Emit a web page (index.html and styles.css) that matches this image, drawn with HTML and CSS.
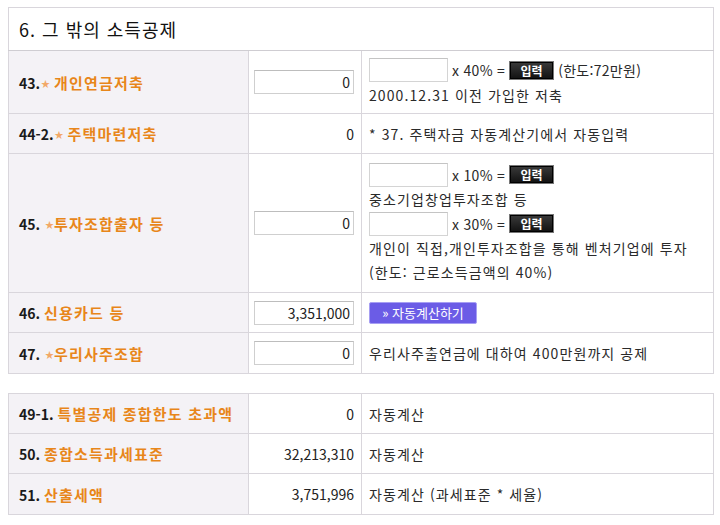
FILE: index.html
```html
<!DOCTYPE html>
<html lang="ko">
<head>
  <meta charset="UTF-8">
  <title>그 밖의 소득공제</title>
  <link rel="stylesheet" href="styles.css">
</head>
<body>
  <div class="wrap">
    <table class="calc">
      <colgroup>
        <col class="c-label"><col class="c-val"><col class="c-desc">
      </colgroup>
      <tr class="head">
        <td colspan="3">6. 그 밖의 소득공제</td>
      </tr>
      <tr class="h63">
        <th><span class="no">43.</span><span class="star">★</span> <span class="name">개인연금저축</span></th>
        <td class="val"><input class="num" type="text" value="0"></td>
        <td class="desc">
          <div class="calc-line"><input class="small" type="text"> <span>x 40% =</span> <button class="btn-in">입력</button> <span>(한도:72만원)</span></div>
          <div class="line">2000.12.31 이전 가입한 저축</div>
        </td>
      </tr>
      <tr class="h40">
        <th><span class="no">44-2.</span><span class="star">★</span> <span class="name">주택마련저축</span></th>
        <td class="val">0</td>
        <td class="desc">* 37. 주택자금 자동계산기에서 자동입력</td>
      </tr>
      <tr class="h139">
        <th><span class="no">45.</span> <span class="star">★</span><span class="name">투자조합출자 등</span></th>
        <td class="val"><input class="num" type="text" value="0"></td>
        <td class="desc">
          <div class="calc-line"><input class="small" type="text"><span>x 10% =</span> <button class="btn-in">입력</button></div>
          <div class="line">중소기업창업투자조합 등</div>
          <div class="calc-line"><input class="small" type="text"><span>x 30% =</span> <button class="btn-in">입력</button></div>
          <div class="line">개인이 직접,개인투자조합을 통해 벤처기업에 투자</div>
          <div class="line">(한도: 근로소득금액의 40%)</div>
        </td>
      </tr>
      <tr class="h40">
        <th><span class="no">46.</span> <span class="name">신용카드 등</span></th>
        <td class="val"><input class="num" type="text" value="3,351,000"></td>
        <td class="desc"><button class="btn-auto">» 자동계산하기</button></td>
      </tr>
      <tr class="h41">
        <th><span class="no">47.</span> <span class="star">★</span><span class="name">우리사주조합</span></th>
        <td class="val"><input class="num" type="text" value="0"></td>
        <td class="desc">우리사주출연금에 대하여 400만원까지 공제</td>
      </tr>
    </table>

    <table class="calc second">
      <colgroup>
        <col class="c-label"><col class="c-val"><col class="c-desc">
      </colgroup>
      <tr class="h40">
        <th><span class="no">49-1.</span> <span class="name">특별공제 종합한도 초과액</span></th>
        <td class="val">0</td>
        <td class="desc">자동계산</td>
      </tr>
      <tr class="h40">
        <th><span class="no">50.</span> <span class="name">종합소득과세표준</span></th>
        <td class="val">32,213,310</td>
        <td class="desc">자동계산</td>
      </tr>
      <tr class="h41">
        <th><span class="no">51.</span> <span class="name">산출세액</span></th>
        <td class="val">3,751,996</td>
        <td class="desc">자동계산 (과세표준 * 세율)</td>
      </tr>
    </table>
  </div>
</body>
</html>
```

FILE: styles.css
```css
body {
  margin: 0;
  background: #ffffff;
  font-family: "Noto Sans CJK KR", "Liberation Sans", sans-serif;
  color: #333;
}
.wrap {
  padding: 7px 8px;
}
.calc {
  width: 705px;
  border-collapse: collapse;
  border: 1px solid #c9c7cc;
  table-layout: fixed;
}
.calc.second {
  margin-top: 19px;
}
.c-label { width: 240px; }
.c-val { width: 113px; }
.c-desc { width: 352px; }
.calc th,
.calc td {
  border: 1px solid #d9d6dc;
  padding: 0;
  vertical-align: middle;
}
.calc th {
  background: #f4f2f6;
  text-align: left;
  padding-left: 10px;
  font-size: 14px;
  font-weight: bold;
  white-space: nowrap;
}
.head td {
  height: 42px;
  background: #fff;
  padding-left: 10px;
  font-size: 18px;
  letter-spacing: 1px;
  color: #111;
  border-bottom: 1px solid #cfcdd2;
}
.h63 th, .h63 td { height: 62px; }
.h40 th, .h40 td { height: 39px; }
.h41 th, .h41 td { height: 40px; }
.h139 th, .h139 td { height: 138px; }
.no {
  color: #1a1a1a;
}
.star {
  color: #f2a868;
  font-size: 9px;
  vertical-align: 2px;
  margin-left: 1px;
}
.name {
  color: #e8861a;
  font-size: 15px;
  letter-spacing: 1.2px;
}
.val {
  text-align: right;
  padding-right: 7px !important;
  font-size: 14px;
  color: #222;
}
.desc {
  padding-left: 7px !important;
  font-size: 14px;
  letter-spacing: 1.1px;
  color: #2a2a2a;
  white-space: nowrap;
}
.num {
  width: 100px;
  height: 24px;
  box-sizing: border-box;
  border: 1px solid #cfcfcf;
  border-top-color: #bdbdbd;
  text-align: right;
  padding: 0 3px;
  font-family: inherit;
  font-size: 14px;
  color: #222;
}
.small {
  width: 79px;
  height: 24px;
  box-sizing: border-box;
  border: 1px solid #d4d4d4;
  border-top-color: #c4c4c4;
  margin: 0;
}
.calc-line {
  display: flex;
  align-items: center;
  gap: 4px;
  height: 25px;
  letter-spacing: 0.3px;
}
.line {
  line-height: 24px;
}
.btn-in {
  width: 45px;
  height: 19px;
  padding: 0;
  background: linear-gradient(#3a3a3a, #111);
  border: 1px solid #777;
  box-shadow: inset 0 0 0 1px #000;
  color: #fff;
  font-family: inherit;
  font-size: 12px;
  font-weight: bold;
  letter-spacing: 0;
  line-height: 15px;
}
.btn-auto {
  width: 108px;
  height: 22px;
  padding: 0;
  background: #6b5ce6;
  border: 1px solid #a79ff3;
  border-radius: 2px;
  color: #fff;
  font-family: inherit;
  font-size: 13px;
  letter-spacing: 0;
  line-height: 18px;
  text-align: center;
}
```
